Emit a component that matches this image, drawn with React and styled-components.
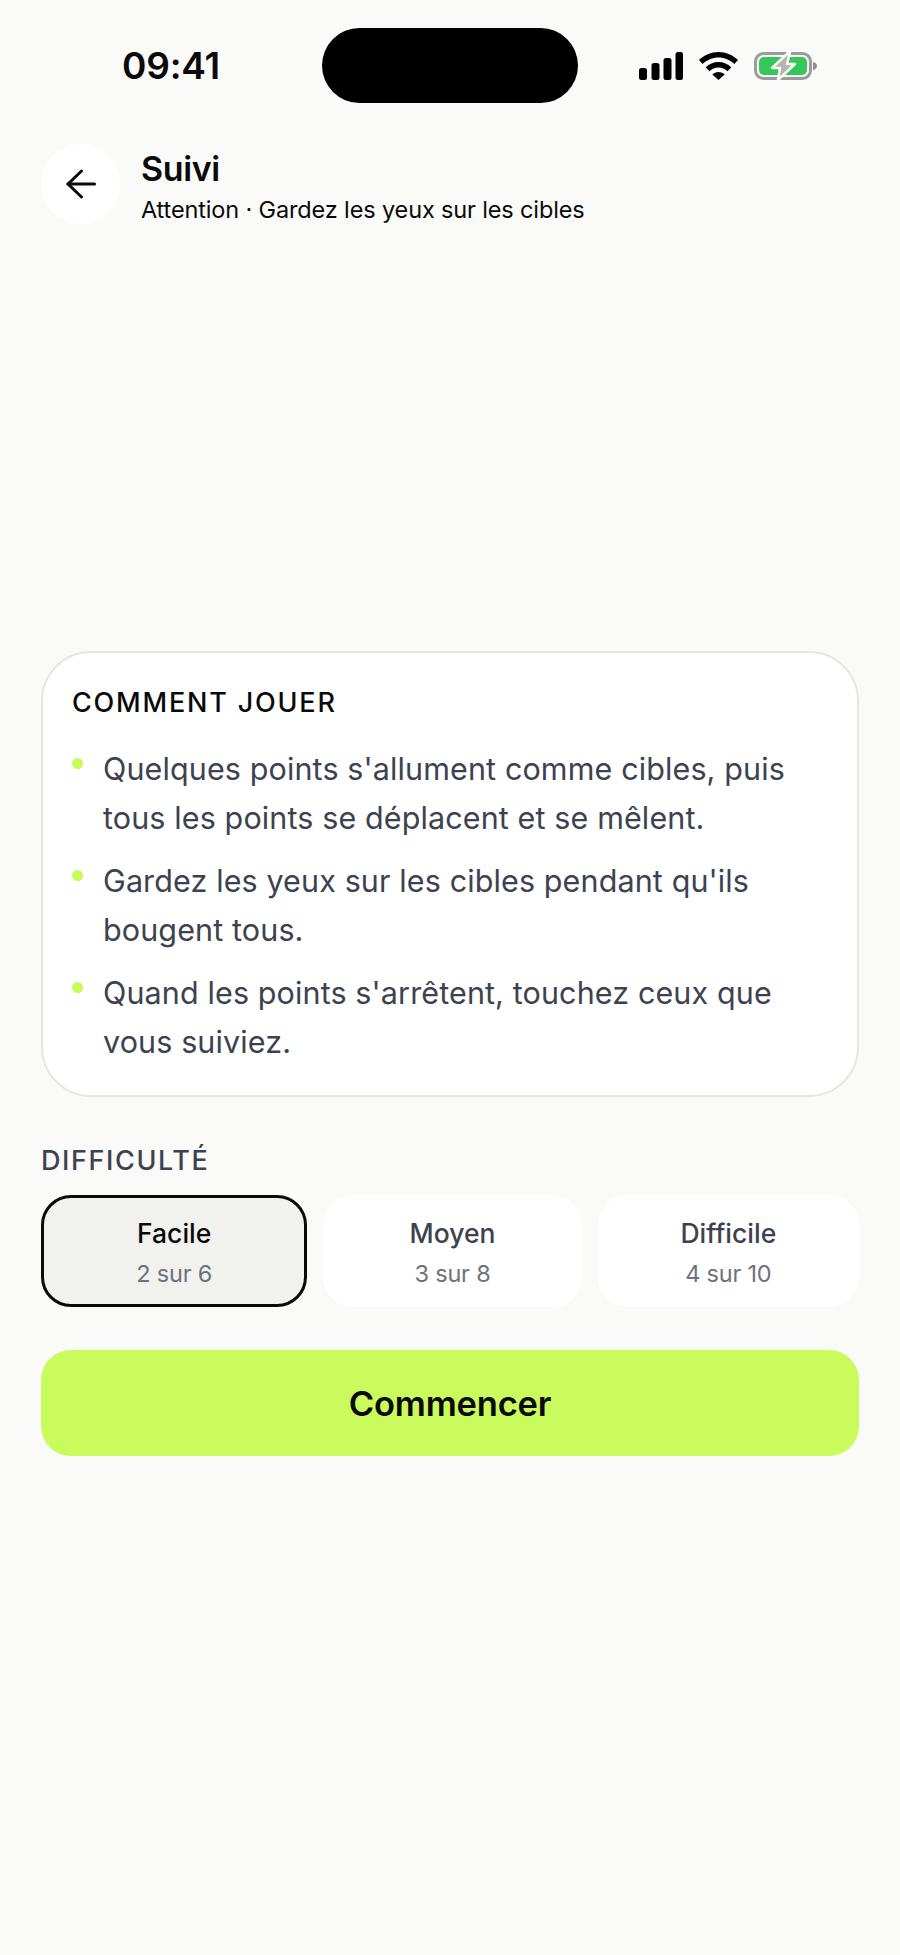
import React from "react";
import styled, { createGlobalStyle } from "styled-components";

const Global = createGlobalStyle`
  html, body { margin: 0; padding: 0; background: #fafaf8; }
  * { box-sizing: border-box; }
`;

const Page = styled.div`
  width: 900px;
  height: 1955px;
  background: #fafaf8;
  font-family: "Inter", "Noto Sans", sans-serif;
  color: #0a0a0a;
  overflow: hidden;
`;

const StatusBar = styled.div`
  display: flex;
  align-items: center;
  height: 75px;
  margin-top: 28px;
  padding-left: 122px;
`;

const Time = styled.div`
  width: 200px;
  font-size: 37px;
  font-weight: 600;
  line-height: 40px;
  letter-spacing: -0.2px;
  color: #0a0a0a;
`;

const Island = styled.div`
  width: 256px;
  height: 75px;
  border-radius: 38px;
  background: #000;
`;

const StatusIcons = styled.div`
  display: flex;
  align-items: center;
  gap: 16px;
  margin-left: 61px;
  height: 28px;
`;

const Header = styled.header`
  display: flex;
  align-items: flex-start;
  gap: 21px;
  margin-top: 41px;
  padding-left: 41px;
`;

const BackButton = styled.div`
  width: 79px;
  height: 80px;
  border-radius: 50%;
  background: #fff;
  display: flex;
  align-items: center;
  justify-content: center;
`;

const Titles = styled.div`
  display: flex;
  flex-direction: column;
  gap: 3px;
  margin-top: 3px;
`;

const Title = styled.div`
  font-size: 34px;
  font-weight: 600;
  line-height: 44px;
  letter-spacing: -0.4px;
`;

const Subtitle = styled.div`
  font-size: 23.5px;
  line-height: 32px;
  font-weight: 400;
  letter-spacing: -0.14px;
`;

const Main = styled.main`
  display: flex;
  flex-direction: column;
  margin-top: 425px;
  padding: 0 41px;
`;

const Card = styled.section`
  height: 446px;
  border: 2px solid #e6e6e1;
  border-radius: 50px;
  background: #fff;
  padding: 32px 40px 0 29px;
`;

const CardTitle = styled.div`
  font-size: 27px;
  font-weight: 500;
  line-height: 36px;
  letter-spacing: 1.8px;
  color: #0a0a0a;
`;

const Rules = styled.ul`
  list-style: none;
  margin: 23px 0 0;
  padding: 0;
  display: flex;
  flex-direction: column;
  gap: 14px;
`;

const Rule = styled.li`
  display: flex;
  gap: 20px;
  font-size: 30.5px;
  line-height: 49px;
  letter-spacing: 0.12px;
  color: #3d4250;
`;

const Dot = styled.span`
  flex: none;
  width: 11px;
  height: 11px;
  margin-top: 14px;
  border-radius: 50%;
  background: #c6fb58;
`;

const SectionLabel = styled.div`
  margin-top: 46px;
  font-size: 27px;
  font-weight: 500;
  line-height: 36px;
  letter-spacing: 1.6px;
  color: #3d4250;
`;

const Levels = styled.div`
  display: grid;
  grid-template-columns: 266fr 258fr 261fr;
  gap: 16px;
  margin-top: 16px;
`;

const Level = styled.div`
  height: 112px;
  padding-top: 3px;
  border-radius: 30px;
  display: flex;
  flex-direction: column;
  align-items: center;
  justify-content: center;
  gap: 9px;
  background: ${(p) => (p.$active ? "#f1f2ee" : "#fff")};
  border: 3px solid ${(p) => (p.$active ? "#0a0a0a" : "transparent")};
`;

const LevelName = styled.div`
  font-size: 26.5px;
  font-weight: 500;
  line-height: 34px;
  letter-spacing: 0;
  color: ${(p) => (p.$active ? "#0a0a0a" : "#3d4250")};
`;

const LevelCount = styled.div`
  font-size: 23.5px;
  line-height: 30px;
  letter-spacing: -0.2px;
  color: #6e727b;
`;

const Cta = styled.button`
  display: block;
  width: 100%;
  height: 106px;
  margin-top: 43px;
  border: 0;
  border-radius: 30px;
  background: #c8fb5b;
  font-family: inherit;
  font-size: 34.5px;
  font-weight: 600;
  letter-spacing: -0.2px;
  color: #0a0a0a;
`;

const levels = [
  { name: "Facile", count: "2 sur 6", active: true },
  { name: "Moyen", count: "3 sur 8" },
  { name: "Difficile", count: "4 sur 10" },
];

const rules = [
  "Quelques points s'allument comme cibles, puis tous les points se déplacent et se mêlent.",
  "Gardez les yeux sur les cibles pendant qu'ils bougent tous.",
  "Quand les points s'arrêtent, touchez ceux que vous suiviez.",
];

const Signal = () => (
  <svg width="44" height="28" viewBox="0 0 44 28" fill="#000">
    <rect x="0" y="16" width="8" height="12" rx="2.5" />
    <rect x="12.5" y="11" width="8" height="17" rx="2.5" />
    <rect x="24.5" y="6" width="8" height="22" rx="2.5" />
    <rect x="36.5" y="0" width="7.5" height="28" rx="2.5" />
  </svg>
);

const Wifi = () => (
  <svg width="39" height="28" viewBox="0 0 39 28" fill="#000">
    <path d="M19.5 0C12 0 5.2 3 0 8l3.6 4C8 8 13.4 5.5 19.5 5.5S31 8 35.4 12L39 8C33.8 3 27 0 19.5 0Z" />
    <path d="M19.5 10c-5 0-9.5 2-12.7 5.2l3.6 4c2.3-2.4 5.6-3.8 9.1-3.8s6.8 1.4 9.1 3.8l3.6-4C29 12 24.5 10 19.5 10Z" />
    <path d="M19.5 20c-2.5 0-4.7 1-6.2 2.6L19.5 28l6.2-5.4C24.2 21 22 20 19.5 20Z" />
  </svg>
);

const Battery = () => (
  <svg width="64" height="28" viewBox="0 0 64 28">
    <rect x="1.5" y="1.5" width="55" height="25" rx="8" fill="none" stroke="#9b9b9b" strokeWidth="3" />
    <rect x="5" y="5" width="48" height="18" rx="5" fill="#34c759" />
    <path d="M59 10c2.5.5 4 2 4 4s-1.5 3.5-4 4Z" fill="#8f8f8f" />
    <path d="M35 0 18 16h8l-2 12 17-16h-8l3-12Z" fill="#b4b4b2" stroke="#fafaf8" strokeWidth="2.5" strokeLinejoin="round" />
  </svg>
);

const BackArrow = () => (
  <svg width="30" height="30" viewBox="0 0 30 30" fill="none" stroke="#0a0a0a" strokeWidth="3" strokeLinecap="round" strokeLinejoin="round">
    <path d="M28.5 15H2" />
    <path d="M15.5 2 2 15l13.5 13" />
  </svg>
);

export default function App() {
  return (
    <Page>
      <Global />
      <StatusBar>
        <Time>09:41</Time>
        <Island />
        <StatusIcons>
          <Signal />
          <Wifi />
          <Battery />
        </StatusIcons>
      </StatusBar>
      <Header>
        <BackButton>
          <BackArrow />
        </BackButton>
        <Titles>
          <Title>Suivi</Title>
          <Subtitle>Attention · Gardez les yeux sur les cibles</Subtitle>
        </Titles>
      </Header>
      <Main>
        <Card>
          <CardTitle>COMMENT JOUER</CardTitle>
          <Rules>
            {rules.map((r) => (
              <Rule key={r}>
                <Dot />
                <span>{r}</span>
              </Rule>
            ))}
          </Rules>
        </Card>
        <SectionLabel>DIFFICULTÉ</SectionLabel>
        <Levels>
          {levels.map((l) => (
            <Level key={l.name} $active={l.active}>
              <LevelName $active={l.active}>{l.name}</LevelName>
              <LevelCount>{l.count}</LevelCount>
            </Level>
          ))}
        </Levels>
        <Cta>Commencer</Cta>
      </Main>
    </Page>
  );
}
